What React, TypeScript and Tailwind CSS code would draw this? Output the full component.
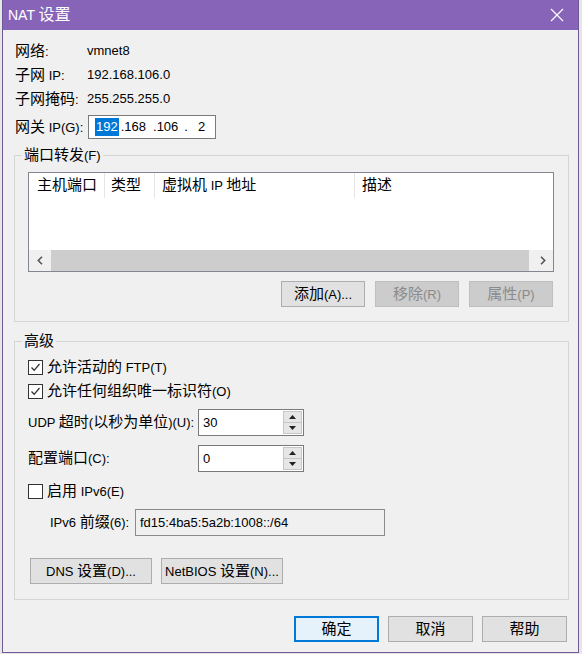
import type { ReactNode } from "react";

// 中文字比拉丁字大一号，像原生对话框那样
const cjk = /([\u3000-\u9fff\uff00-\uffef]+)/;
function T({ s }: { s: string }) {
  return (
    <span>
      {s.split(cjk).map((p, i) =>
        i % 2 === 1 ? (
          <span key={i} className="text-[15px]">
            {p}
          </span>
        ) : (
          p
        )
      )}
    </span>
  );
}

function Btn({ label, w, disabled, focus }: { label: string; w: string; disabled?: boolean; focus?: boolean }) {
  const look = disabled
    ? "bg-[#cccccc] border border-[#bfbfbf] text-[#8a8a8a]"
    : focus
    ? "bg-[#e5f1fb] border-2 border-[#0078d7]"
    : "bg-[#e1e1e1] border border-[#adadad]";
  return (
    <div className={`${w} h-[26px] flex items-center justify-center leading-[18px] ${look}`}>
      <T s={label} />
    </div>
  );
}

function Check({ on, label }: { on?: boolean; label: string }) {
  return (
    <div className="flex items-center h-[16px] leading-[18px]">
      <div className="w-[15px] h-[15px] border border-[#333] bg-white flex items-center justify-center">
        {on && (
          <svg width="11" height="11" viewBox="0 0 11 11">
            <path d="M1.5 5.5 L4.2 8.3 L9.5 2" fill="none" stroke="#333" strokeWidth="1.3" />
          </svg>
        )}
      </div>
      <span className="ml-[4px]">
        <T s={label} />
      </span>
    </div>
  );
}

function Tri({ up }: { up?: boolean }) {
  return (
    <svg width="7" height="4" viewBox="0 0 7 4">
      <path d={up ? "M0 4 L3.5 0 L7 4 Z" : "M0 0 L3.5 4 L7 0 Z"} fill="#222" />
    </svg>
  );
}

function Spin({ value }: { value: string }) {
  return (
    <div className="w-[106px] h-[27px] flex border border-[#7a7a7a] bg-white">
      <div className="flex-1 pl-[4px] flex items-center">{value}</div>
      <div className="w-[19px] flex flex-col my-[1px] mr-[1px]">
        <div className="flex-1 flex items-center justify-center bg-[#e6e6e6] border border-[#c6c6c6]">
          <Tri up />
        </div>
        <div className="flex-1 flex items-center justify-center bg-[#e6e6e6] border border-t-0 border-[#c6c6c6]">
          <Tri />
        </div>
      </div>
    </div>
  );
}

function Chevron({ left }: { left?: boolean }) {
  return (
    <svg width="6" height="9" viewBox="0 0 6 9">
      <path d={left ? "M5 0.8 L1.3 4.5 L5 8.2" : "M1 0.8 L4.7 4.5 L1 8.2"} fill="none" stroke="#555" strokeWidth="1.6" />
    </svg>
  );
}

function Row({ label, children }: { label: string; children: ReactNode }) {
  return (
    <div className="flex items-center h-[24px] leading-[18px]">
      <div className="w-[72px]">
        <T s={label} />
      </div>
      <div>{children}</div>
    </div>
  );
}

export default function App() {
  const cols = [
    { name: "主机端口", w: "w-[76px]", pad: "pl-[8px]" },
    { name: "类型", w: "w-[50px]", pad: "pl-[6px]" },
    { name: "虚拟机 IP 地址", w: "w-[200px]", pad: "pl-[7px]" },
    { name: "描述", w: "flex-1", pad: "pl-[7px]" },
  ];

  return (
    <div className="w-[582px] h-[654px] bg-[#e6e6e6] flex overflow-hidden text-[13px] text-black font-['Liberation_Sans','Noto_Sans_CJK_SC',sans-serif]">
      <div className="w-[2px]" />
      <div className="w-[577px] h-[653px] flex flex-col bg-[#f0f0f0] border-x border-b border-[#6e5a96]">
        {/* 标题栏 */}
        <div className="h-[30px] bg-[#8764b8] flex items-center justify-between pl-[5px] pr-[14px] text-white">
          <div className="text-[14px] leading-[18px]">
            NAT <span className="text-[16px]">设置</span>
          </div>
          <svg width="14" height="14" viewBox="0 0 14 14">
            <path d="M1 1 L13 13 M13 1 L1 13" stroke="#fff" strokeWidth="1.2" />
          </svg>
        </div>

        <div className="flex-1 flex flex-col pl-[11px] pr-[9px]">
          <div className="ml-[1px] mt-[9px] flex flex-col">
            <Row label="网络:">vmnet8</Row>
            <Row label="子网 IP:">192.168.106.0</Row>
            <Row label="子网掩码:">255.255.255.0</Row>
            <div className="flex items-center h-[26px] mt-[3px] leading-[18px]">
              <div className="w-[73px]">
                <T s="网关 IP(G):" />
              </div>
              <div className="w-[128px] h-[24px] border border-[#7a7a7a] bg-white flex items-center pl-[6px]">
                <span className="bg-[#0078d7] text-white px-[1px]">192</span>
                <span className="ml-[2px]">.168</span>
                <span className="ml-[7px]">.106</span>
                <span className="ml-[6px]">.</span>
                <span className="ml-[10px]">2</span>
              </div>
            </div>
          </div>

          {/* 端口转发 */}
          <fieldset className="mt-[7px] border border-[#d5d5d5] pl-[13px] pr-[14px] pb-[14px]">
            <legend className="ml-[-6px] px-[2px] leading-[16px]">
              <T s="端口转发(F)" />
            </legend>
            <div className="mt-[8px] h-[100px] border border-[#828790] bg-white flex flex-col">
              <div className="h-[25px] flex leading-[18px]">
                {cols.map((c, i) => (
                  <div key={c.name} className={`${c.w} ${c.pad} flex items-center ${i < 3 ? "border-r border-[#e5e5e5]" : ""}`}>
                    <T s={c.name} />
                  </div>
                ))}
              </div>
              <div className="flex-1" />
              <div className="h-[21px] flex bg-[#f0f0f0]">
                <div className="w-[22px] flex items-center justify-center">
                  <Chevron left />
                </div>
                <div className="flex-1 bg-[#cdcdcd] mr-[4px]" />
                <div className="w-[20px] flex items-center justify-center">
                  <Chevron />
                </div>
              </div>
            </div>
            <div className="mt-[9px] flex justify-end gap-[10px] pr-[1px]">
              <Btn label="添加(A)..." w="w-[84px]" />
              <Btn label="移除(R)" w="w-[84px]" disabled />
              <Btn label="属性(P)" w="w-[84px]" disabled />
            </div>
          </fieldset>

          {/* 高级 */}
          <fieldset className="mt-[11px] border border-[#d5d5d5] pl-[13px] pr-[14px] pb-[15px]">
            <legend className="ml-[-6px] px-[2px] leading-[16px]">
              <T s="高级" />
            </legend>
            <div className="mt-[9px]">
              <Check on label="允许活动的 FTP(T)" />
            </div>
            <div className="mt-[8px]">
              <Check on label="允许任何组织唯一标识符(O)" />
            </div>
            <div className="mt-[10px] flex items-center leading-[18px]">
              <div className="w-[170px]">
                <T s="UDP 超时(以秒为单位)(U):" />
              </div>
              <Spin value="30" />
            </div>
            <div className="mt-[9px] flex items-center leading-[18px]">
              <div className="w-[170px]">
                <T s="配置端口(C):" />
              </div>
              <Spin value="0" />
            </div>
            <div className="mt-[11px]">
              <Check label="启用 IPv6(E)" />
            </div>
            <div className="mt-[10px] flex items-center leading-[18px] pl-[22px]">
              <div className="w-[85px]">
                <T s="IPv6 前缀(6):" />
              </div>
              <div className="w-[250px] h-[27px] border border-[#8a8a8a] flex items-center pl-[4px]">fd15:4ba5:5a2b:1008::/64</div>
            </div>
            <div className="mt-[22px] ml-[2px] flex gap-[9px]">
              <Btn label="DNS 设置(D)..." w="w-[122px]" />
              <Btn label="NetBIOS 设置(N)..." w="w-[122px]" />
            </div>
          </fieldset>

          <div className="mt-[16px] flex justify-end gap-[9px] pr-[2px]">
            <Btn label="确定" w="w-[85px]" focus />
            <Btn label="取消" w="w-[85px]" />
            <Btn label="帮助" w="w-[85px]" />
          </div>
        </div>
      </div>
    </div>
  );
}
